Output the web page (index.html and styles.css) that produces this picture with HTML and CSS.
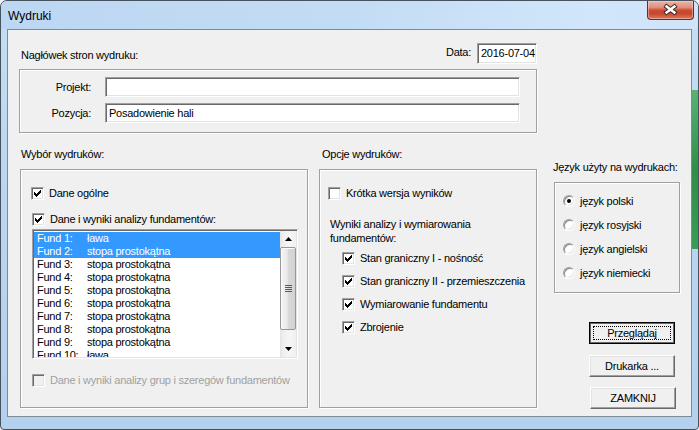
FILE: index.html
```html
<!DOCTYPE html>
<html lang="pl">
<head>
<meta charset="utf-8">
<title>Wydruki</title>
<link rel="stylesheet" href="styles.css">
</head>
<body>
<div class="window">
  <div class="titlebar">
    <span class="title">Wydruki</span>
    <div class="close-btn">
      <svg width="47" height="19" viewBox="0 0 47 19">
        <path d="M20 6.5 L28 12.5 M28 6.5 L20 12.5" stroke="#3a2b29" stroke-width="4.6" stroke-linecap="square" fill="none"/>
        <path d="M20 6.5 L28 12.5 M28 6.5 L20 12.5" stroke="#ffffff" stroke-width="2.6" stroke-linecap="square" fill="none"/>
      </svg>
    </div>
  </div>
  <div class="client">
    <div class="top">
      <div class="head-row">
        <span class="head-label">Nagłówek stron wydruku:</span>
        <div class="date">
          <span class="date-label">Data:</span>
          <div class="field date-field">2016-07-04</div>
        </div>
      </div>
      <div class="group head-group">
        <div class="field-row"><span class="field-label">Projekt:</span><div class="field wide"></div></div>
        <div class="field-row"><span class="field-label">Pozycja:</span><div class="field wide">Posadowienie hali</div></div>
      </div>
    </div>

    <div class="bottom">
      <div class="col col-left">
        <div class="col-label">Wybór wydruków:</div>
        <div class="group left-group">
          <div class="cb-row"><span class="box"><svg width="7" height="7" viewBox="0 0 7 7"><path d="M0 2h1v1h1v1h1v-1h1v-1h1v-1h1v-1h1v3h-1v1h-1v1h-1v1h-1v1h-1v-1h-1v-1h-1z" fill="#000"/></svg></span>Dane ogólne</div>
          <div class="cb-row cb-shift cb-second"><span class="box"><svg width="7" height="7" viewBox="0 0 7 7"><path d="M0 2h1v1h1v1h1v-1h1v-1h1v-1h1v-1h1v3h-1v1h-1v1h-1v1h-1v1h-1v-1h-1v-1h-1z" fill="#000"/></svg></span>Dane i wyniki analizy fundamentów:</div>
          <div class="listbox">
            <div class="items">
              <div class="item sel"><span class="num">Fund 1:</span><span>ława</span></div>
              <div class="item sel"><span class="num">Fund 2:</span><span>stopa prostokątna</span></div>
              <div class="item"><span class="num">Fund 3:</span><span>stopa prostokątna</span></div>
              <div class="item"><span class="num">Fund 4:</span><span>stopa prostokątna</span></div>
              <div class="item"><span class="num">Fund 5:</span><span>stopa prostokątna</span></div>
              <div class="item"><span class="num">Fund 6:</span><span>stopa prostokątna</span></div>
              <div class="item"><span class="num">Fund 7:</span><span>stopa prostokątna</span></div>
              <div class="item"><span class="num">Fund 8:</span><span>stopa prostokątna</span></div>
              <div class="item"><span class="num">Fund 9:</span><span>stopa prostokątna</span></div>
              <div class="item"><span class="num">Fund 10:</span><span>ława</span></div>
            </div>
            <div class="scrollbar">
              <div class="sb-btn"><svg width="7" height="4" viewBox="0 0 7 4"><path d="M3.5 0L7 4H0z" fill="#000"/></svg></div>
              <div class="sb-thumb"><svg width="7" height="7" viewBox="0 0 7 7"><path d="M0 0.5h7M0 2.5h7M0 4.5h7M0 6.5h7" stroke="#5a5a5a" stroke-width="1"/></svg></div>
              <div class="sb-track"></div>
              <div class="sb-btn"><svg width="7" height="4" viewBox="0 0 7 4"><path d="M0 0H7L3.5 4z" fill="#000"/></svg></div>
            </div>
          </div>
          <div class="cb-row cb-shift cb-disabled"><span class="box box-disabled"></span>Dane i wyniki analizy grup i szeregów fundamentów</div>
        </div>
      </div>

      <div class="col col-mid">
        <div class="col-label mid-label">Opcje wydruków:</div>
        <div class="group mid-group">
          <div class="cb-row"><span class="box"></span>Krótka wersja wyników</div>
          <div class="mid-text">Wyniki analizy i wymiarowania<br>fundamentów:</div>
          <div class="sub-checks">
            <div class="cb-row"><span class="box"><svg width="7" height="7" viewBox="0 0 7 7"><path d="M0 2h1v1h1v1h1v-1h1v-1h1v-1h1v-1h1v3h-1v1h-1v1h-1v1h-1v1h-1v-1h-1v-1h-1z" fill="#000"/></svg></span>Stan graniczny I - nośność</div>
            <div class="cb-row"><span class="box"><svg width="7" height="7" viewBox="0 0 7 7"><path d="M0 2h1v1h1v1h1v-1h1v-1h1v-1h1v-1h1v3h-1v1h-1v1h-1v1h-1v1h-1v-1h-1v-1h-1z" fill="#000"/></svg></span>Stan graniczny II - przemieszczenia</div>
            <div class="cb-row"><span class="box"><svg width="7" height="7" viewBox="0 0 7 7"><path d="M0 2h1v1h1v1h1v-1h1v-1h1v-1h1v-1h1v3h-1v1h-1v1h-1v1h-1v1h-1v-1h-1v-1h-1z" fill="#000"/></svg></span>Wymiarowanie fundamentu</div>
            <div class="cb-row"><span class="box"><svg width="7" height="7" viewBox="0 0 7 7"><path d="M0 2h1v1h1v1h1v-1h1v-1h1v-1h1v-1h1v3h-1v1h-1v1h-1v1h-1v1h-1v-1h-1v-1h-1z" fill="#000"/></svg></span>Zbrojenie</div>
          </div>
        </div>
      </div>

      <div class="col col-right">
        <div class="col-label right-label">Język użyty na wydrukach:</div>
        <div class="group right-group">
          <div class="radio-row"><span class="radio on"></span>język polski</div>
          <div class="radio-row"><span class="radio"></span>język rosyjski</div>
          <div class="radio-row"><span class="radio"></span>język angielski</div>
          <div class="radio-row"><span class="radio"></span>język niemiecki</div>
        </div>
        <div class="buttons">
          <div class="btn btn-default"><span class="focus">Przeglądaj</span></div>
          <div class="btn">Drukarka ...</div>
          <div class="btn btn-close">ZAMKNIJ</div>
        </div>
      </div>
    </div>
  </div>
</div>
</body>
</html>
```

FILE: styles.css
```css
* { box-sizing: border-box; }
html, body { margin: 0; padding: 0; }
body {
  width: 699px;
  height: 430px;
  overflow: hidden;
  background: #eef2f6;
  font-family: "Liberation Sans", Arial, sans-serif;
  font-size: 11px;
  letter-spacing: -0.25px;
  color: #000;
}

.window {
  width: 699px;
  height: 430px;
  border: 1px solid #46525e;
  border-radius: 7px 7px 4px 4px;
  padding: 0 6px 12px;
  display: flex;
  flex-direction: column;
  background:
    linear-gradient(to bottom, transparent 0, transparent 89px, #59b273 89px, #2f8e4a 170px, #3a9c56 248px, transparent 248px) right top / 6px 100% no-repeat,
    linear-gradient(to bottom, #c0daf3 0, #c4ddf5 30px, #bad5ef 200px, #b3d1ee 100%);
}

.titlebar {
  height: 28px;
  margin: 0 -6px;
  padding: 0 5px 0 7px;
  display: flex;
  align-items: center;
  border-radius: 6px 6px 0 0;
  background: linear-gradient(to right, #bcd7f2 0, #c3dcf5 50%, #d1e6fa 85%, #cfe4f8 100%);
}
.title {
  font-size: 12px;
  letter-spacing: 0;
  line-height: 14px;
  padding-top: 2px;
}
.close-btn {
  margin-left: auto;
  align-self: flex-start;
  width: 47px;
  height: 19px;
  border: 1px solid #6a2b21;
  border-top: none;
  border-radius: 0 0 4px 4px;
  background: linear-gradient(to bottom, #eab4a6 0, #e0927e 35%, #c94c33 52%, #c8472d 70%, #db7a60 100%);
  box-shadow: inset 0 0 0 1px rgba(255, 220, 210, 0.45);
  display: flex;
  margin-right: -1px;
}
.close-btn svg { display: block; margin: -1px 0 0 -1px; }

.client {
  width: 685px;
  height: 388px;
  border: 1px solid #7d8b98;
  background: #f0f0f0;
  padding: 13px 0 0 11px;
  display: flex;
  flex-direction: column;
}

/* header */
.top { width: 518px; }
.head-row {
  display: flex;
  justify-content: space-between;
  height: 21px;
}
.head-label { padding: 6px 0 0 2px; line-height: 13px; }
.date { display: flex; }
.date-label { line-height: 13px; padding-top: 3px; margin-right: 6px; }

.field {
  background: #fff;
  border: 1px solid;
  border-color: #a0a0a0 #ffffff #ffffff #a0a0a0;
  box-shadow: inset 1px 1px #696969, inset -1px -1px #e3e3e3;
  line-height: 13px;
  white-space: nowrap;
  overflow: hidden;
}
.date-field { width: 60px; height: 21px; padding: 3px 0 0 3px; }
.wide { width: 415px; height: 20px; padding: 3px 0 0 3px; }

.group {
  border: 1px solid #a0a0a0;
  box-shadow: inset 1px 1px #ffffff, 1px 1px #ffffff;
}
.head-group {
  margin-top: 5px;
  height: 64px;
  padding-top: 7px;
  display: flex;
  flex-direction: column;
  gap: 6px;
}
.field-row { display: flex; align-items: center; }
.field-label { width: 71px; text-align: right; margin-right: 14px; line-height: 13px; }

/* lower area */
.bottom { display: flex; margin-top: 15px; }
.col-label { line-height: 13px; height: 13px; white-space: nowrap; }
.col-left { margin-left: 1px; width: 288px; }
.col-left .col-label { padding-left: 1px; }
.left-group {
  margin-top: 8px;
  height: 239px;
  padding: 17px 0 0 10px;
}

.cb-row {
  display: flex;
  align-items: center;
  height: 13px;
  line-height: 13px;
  white-space: nowrap;
}
.box {
  width: 13px;
  height: 13px;
  flex: none;
  margin-right: 5px;
  background: #fff;
  border: 1px solid;
  border-color: #a0a0a0 #ffffff #ffffff #a0a0a0;
  box-shadow: inset 1px 1px #696969, inset -1px -1px #e3e3e3;
  display: flex;
  align-items: center;
  justify-content: center;
}
.box svg { display: block; }
.box-disabled { background: #f0f0f0; }
.cb-shift { margin-left: 1px; }
.cb-second { margin-top: 13px; }
.cb-disabled { margin-top: 15px; color: #a0a0a0; }

.listbox {
  margin: 3px 0 0 1px;
  width: 266px;
  height: 130px;
  display: flex;
  background: #fff;
  border: 1px solid;
  border-color: #a0a0a0 #ffffff #ffffff #a0a0a0;
  box-shadow: inset 1px 1px #696969, inset -1px -1px #e3e3e3;
  padding: 1px;
}
.items { width: 246px; padding-top: 1px; overflow: hidden; }
.item {
  display: flex;
  height: 13px;
  line-height: 13px;
  padding-left: 3px;
  white-space: nowrap;
}
.item .num { width: 50px; flex: none; }
.item.sel { background: #3399ff; color: #fff; }

.scrollbar {
  width: 16px;
  display: flex;
  flex-direction: column;
  background: linear-gradient(to right, #e4e4e4 0, #efefef 20%, #f6f6f6 60%, #f0f0f0 100%);
}
.sb-btn {
  height: 16px;
  flex: none;
  display: flex;
  align-items: center;
  justify-content: center;
}
.sb-btn svg { display: block; }
.sb-thumb {
  height: 83px;
  flex: none;
  border: 1px solid #979797;
  border-radius: 2px;
  background: linear-gradient(to right, #f4f4f4 0, #e9e9e9 45%, #d9d9d9 50%, #d2d2d2 100%);
  box-shadow: inset 1px 1px #fbfbfb;
  display: flex;
  align-items: center;
  justify-content: center;
}
.sb-thumb svg { display: block; }
.sb-track { flex: 1; }

/* middle */
.col-mid { margin-left: 11px; width: 218px; }
.mid-label { padding-left: 3px; }
.mid-group {
  margin-top: 8px;
  height: 239px;
  padding: 17px 0 0 8px;
}
.mid-text {
  margin: 17px 0 0 2px;
  line-height: 14px;
  white-space: nowrap;
}
.sub-checks {
  margin: 7px 0 0 14px;
  display: flex;
  flex-direction: column;
  gap: 10px;
}

/* right */
.col-right { margin-left: 17px; width: 126px; padding-top: 13px; }
.right-label { margin-left: -1px; }
.right-group {
  margin-top: 8px;
  height: 111px;
  padding: 12px 0 0 8px;
  display: flex;
  flex-direction: column;
  gap: 12px;
}
.radio-row {
  display: flex;
  align-items: center;
  height: 12px;
  line-height: 12px;
  white-space: nowrap;
}
.radio {
  width: 12px;
  height: 12px;
  flex: none;
  margin-right: 5px;
  border-radius: 50%;
  background: #fff;
  border: 1px solid;
  border-color: #a0a0a0 #ffffff #ffffff #a0a0a0;
  box-shadow: inset 1px 1px #8a8a8a, inset -1px -1px #e3e3e3;
  display: flex;
  align-items: center;
  justify-content: center;
}
.radio.on::after {
  content: "";
  width: 4px;
  height: 4px;
  border-radius: 50%;
  background: #000;
}

.buttons {
  margin: 29px 0 0 35px;
  display: flex;
  flex-direction: column;
}
.btn {
  width: 86px;
  height: 22px;
  background: #f0f0f0;
  border: 1px solid;
  border-color: #ffffff #696969 #696969 #ffffff;
  box-shadow: inset -1px -1px #a0a0a0, inset 1px 1px #e3e3e3;
  display: flex;
  align-items: center;
  justify-content: center;
  line-height: 13px;
  white-space: nowrap;
}
.btn + .btn { margin-top: 11px; }
.btn-close { margin-top: 10px !important; margin-left: 1px; }
.btn-default {
  border: 1px solid #000;
  box-shadow: inset 0 0 0 1px #696969;
}
.focus {
  width: 78px;
  height: 14px;
  border: 1px dotted #000;
  display: flex;
  align-items: center;
  justify-content: center;
}
```
